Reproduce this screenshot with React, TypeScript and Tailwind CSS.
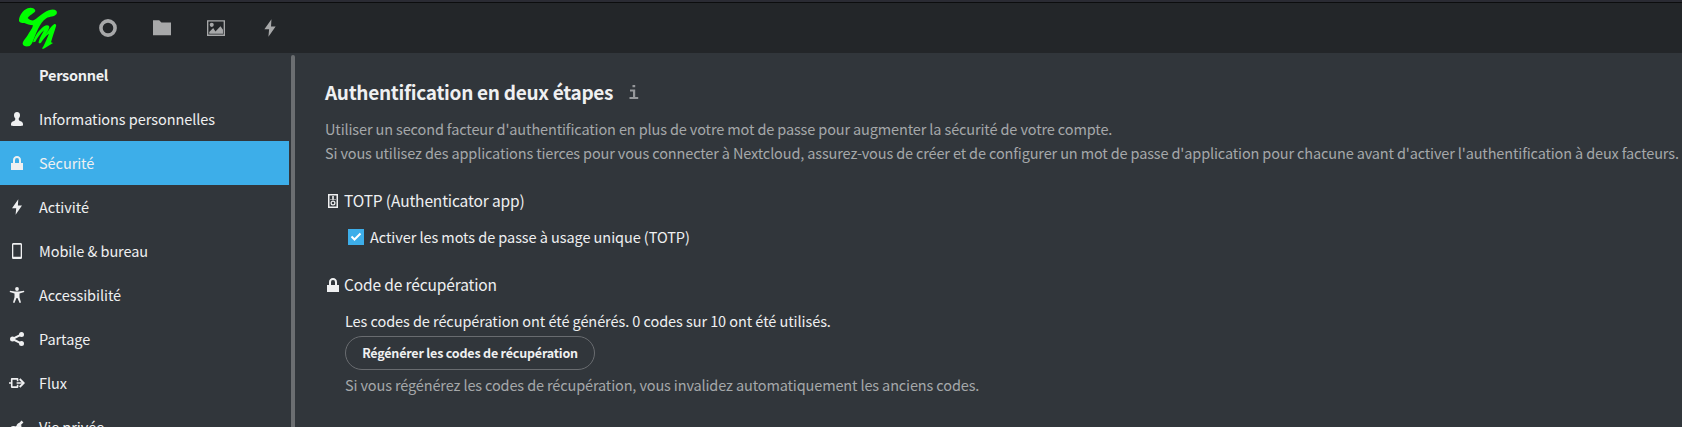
import type { ReactNode } from "react";

type IconProps = { children: ReactNode; className?: string };

function Icon({ children, className = "size-4" }: IconProps) {
  return (
    <svg viewBox="0 0 16 16" className={`shrink-0 ${className}`} fill="currentColor" aria-hidden="true">
      {children}
    </svg>
  );
}

const bolt = <path d="M9.3 0.3 3 9.2h4.2L6.6 15.7 13 6.6H8.9Z" />;
const lock = (
  <path
    fillRule="evenodd"
    d="M8 1a4 4 0 0 0-4 4.2V8H2v7h12V8h-2V5.200A4 4 0 0 0 8 1Zm0 2a2 2 0 0 1 2 2.200V8H6V5.200A2 2 0 0 1 8 3Z"
  />
);
const user = (
  <path d="M8 1C6.300 1 5 2.200 5 3.900c0 1.700.5 2.700 1.300 3.500 0 1-.1 1.800-.8 2.300C4 10.300 2 10.700 2 13v1.500c2 .7 10 .7 12 0V13c0-2.300-2-2.700-3.500-3.300-.7-.5-.8-1.300-.8-2.300C10.500 6.600 11 5.600 11 3.900 11 2.200 9.700 1 8 1Z" />
);
const phone = (
  <path
    fillRule="evenodd"
    d="M4.500 0C3.700 0 3 .6 3 1.300v13.400c0 .7.700 1.300 1.500 1.300h7c.8 0 1.500-.6 1.500-1.300V1.300C13 .6 12.300 0 11.500 0ZM4.300 1.700h7.400v12H4.300Z"
  />
);
const accessibility = (
  <>
    <circle cx="8" cy="2" r="1.900" />
    <path d="M1 3.800 6 4.500h4l5-.7.3 1.300L10.500 6.500v3.800L12 15.600l-1.400.4L8.500 11h-1L5.400 16 4 15.600l1.500-5.300V6.500L.7 5.100Z" />
  </>
);
const share = (
  <>
    <path d="M3.500 8 12.500 3.300M3.500 8l9 4.700" stroke="currentColor" strokeWidth="2" />
    <circle cx="3.500" cy="8" r="2.500" />
    <circle cx="12.500" cy="3.500" r="2.500" />
    <circle cx="12.500" cy="12.500" r="2.500" />
  </>
);
const flow = (
  <>
    <path
      d="M0 8h2M8.600 6.200V3.900H2.700v8.200h5.900V9.800M7.600 8H14"
      fill="none"
      stroke="currentColor"
      strokeWidth="1.600"
      strokeLinejoin="round"
    />
    <path d="m10.700 4 4 4-4 4" fill="none" stroke="currentColor" strokeWidth="1.900" />
  </>
);
const key = (
  <>
    <path d="m5 11 8.500-8.500M8.500 5 12 8" stroke="currentColor" strokeWidth="2.600" />
    <circle cx="4.500" cy="10.500" r="3.500" />
  </>
);

const items = [
  { label: "Informations personnelles", icon: user },
  { label: "Sécurité", icon: lock, active: true },
  { label: "Activité", icon: bolt },
  { label: "Mobile & bureau", icon: phone },
  { label: "Accessibilité", icon: accessibility },
  { label: "Partage", icon: share },
  { label: "Flux", icon: flow },
  { label: "Vie privée", icon: key },
];

function Header() {
  return (
    <header className="flex h-[53px] shrink-0 flex-col bg-[#232629]">
      <div className="h-[3px] shrink-0 border-b border-[#0c0d0e] bg-[#2a2b33]" />
      <div className="flex h-[50px] items-center pl-4 text-[#a7a8a9]">
        <svg viewBox="0 0 138 144" className="h-12 w-[46px] shrink-0" fill="#00ff00" aria-hidden="true">
          <path d="M9 50C9 36 20 19 35 13C45 9 57 13 58 20C56 28 40 32 35 42C38 46 46 50 53 49C63 43 72 33 84 26C95 20 106 16 113 17C122 17 125 25 121 31C115 39 101 37 91 43C80 50 73 62 66 75C59 90 55 102 51 111C47 121 42 128 36 127C28 128 20 124 20 119C20 110 29 104 34 95C42 82 49 74 51 64C42 64 32 59 25 57C16 57 9 54 9 50Z" />
          <path d="M51 115C55 98 68 79 84 67C91 62 101 63 100 70C98 78 92 86 89 92C97 79 106 67 114 61C118 58 122 62 120 67C115 84 109 100 105 115L111 117C102 123 91 130 83 134C78 136 77 132 81 129C87 117 94 101 99 89C91 94 82 105 75 116C71 119 67 118 68 113C71 101 80 88 84 79C72 89 64 103 58 113Z" />
        </svg>
        <nav className="ml-[37px] flex items-center gap-9">
          <Icon className="size-[18px]">
            <circle cx="8" cy="8" r="6.300" fill="none" stroke="currentColor" strokeWidth="3.200" />
          </Icon>
          <Icon className="size-[18px]">
            <path d="M0 1h5.500l2 2H16v11.500H0Z" />
          </Icon>
          <Icon className="size-[18px]">
            <path fillRule="evenodd" d="M0 1h16v14H0Zm1.200 1.200v11.600h13.600V2.200Z" />
            <circle cx="4.200" cy="5.200" r="1.800" />
            <path d="M2 13v-1.500L5.500 8l2 3L12 6.500l2.200 3V13Z" />
          </Icon>
          <Icon className="size-[18px]">{bolt}</Icon>
        </nav>
      </div>
    </header>
  );
}

function Sidebar() {
  return (
    <aside className="flex w-[295px] shrink-0 justify-between overflow-hidden">
      <div className="flex w-[289px] flex-col tracking-[-0.06px]">
        <div className="flex h-11 shrink-0 items-center pl-[39px] font-bold tracking-[-0.3px]">Personnel</div>
        {items.map((item) => (
          <a
            key={item.label}
            className={`flex h-11 shrink-0 items-center gap-[14px] pl-[9px] whitespace-nowrap ${
              item.active ? "bg-[#3daee9]" : ""
            }`}
          >
            <Icon>{item.icon}</Icon>
            {item.label}
          </a>
        ))}
      </div>
      <div className="mt-0.5 w-1 rounded-t-sm bg-[#6b6e71]" />
    </aside>
  );
}

function Content() {
  return (
    <main className="flex min-w-0 flex-1 flex-col overflow-hidden pl-[30px] whitespace-nowrap">
      <h2 className="mt-[25px] flex h-7 items-center text-[19px] font-bold tracking-[-0.29px]">
        Authentification en deux étapes
        <svg viewBox="0 0 10 16" className="ml-4 h-4 w-[10px]" fill="#96989b" aria-hidden="true">
          <path d="M3.500 1h2.700v2.300H3.500ZM1 5.500h5.200V13h3v1.900H.5V13h3.500V7.400H1Z" />
        </svg>
      </h2>
      <div className="mt-[11px] leading-6 text-[#a5a8aa]">
        <p className="tracking-[-0.13px]">
          Utiliser un second facteur d'authentification en plus de votre mot de passe pour augmenter la sécurité de votre compte.
        </p>
        <p className="tracking-[-0.14px]">
          Si vous utilisez des applications tierces pour vous connecter à Nextcloud, assurez-vous de créer et de configurer un mot
          de passe d'application pour chacune avant d'activer l'authentification à deux facteurs.
        </p>
      </div>
      <h3 className="mt-6 flex h-6 items-center gap-[3px] text-[15.5px]">
        <Icon>
          <path fillRule="evenodd" d="M3 1h10v14H3Zm1.500 1.500v11h7v-11Z" />
          <path d="M7.200 3h1.600v4H7.200Z" />
          <circle cx="8" cy="10" r="1.900" fill="none" stroke="currentColor" strokeWidth="1.200" />
          <path d="M5.500 6h1v1h-1Zm4 0h1v1h-1Z" />
        </Icon>
        TOTP (Authenticator app)
      </h3>
      <label className="mt-3 ml-[23px] flex h-6 items-center gap-[6px] tracking-[-0.065px]">
        <span className="flex size-4 items-center justify-center bg-[#3daee9]">
          <svg viewBox="0 0 16 16" className="size-4" fill="none" stroke="white" strokeWidth="2" aria-hidden="true">
            <path d="m3.500 7.500 3 3 6-6" />
          </svg>
        </span>
        Activer les mots de passe à usage unique (TOTP)
      </label>
      <h3 className="mt-6 flex h-6 items-center gap-[3px] text-[15.5px]">
        <Icon>{lock}</Icon>
        Code de récupération
      </h3>
      <div className="mt-3 flex flex-col items-start pl-5">
        <p className="leading-6 tracking-[-0.07px]">
          Les codes de récupération ont été générés. 0 codes sur 10 ont été utilisés.
        </p>
        <button className="mt-[3px] flex h-[34px] w-[250px] items-center justify-center rounded-full border border-[#696c70] text-[12.5px] font-bold tracking-[-0.19px]">
          Régénérer les codes de récupération
        </button>
        <p className="mt-[3px] leading-6 text-[#a5a8aa]">
          Si vous régénérez les codes de récupération, vous invalidez automatiquement les anciens codes.
        </p>
      </div>
    </main>
  );
}

export default function App() {
  return (
    <div className="flex h-screen flex-col overflow-hidden bg-[#31363b] font-['Noto_Sans_CJK_SC','Noto_Sans',sans-serif] text-[14.5px] tracking-[-0.135px] text-[#eff0f1]">
      <Header />
      <div className="flex min-h-0 flex-1">
        <Sidebar />
        <Content />
      </div>
    </div>
  );
}
